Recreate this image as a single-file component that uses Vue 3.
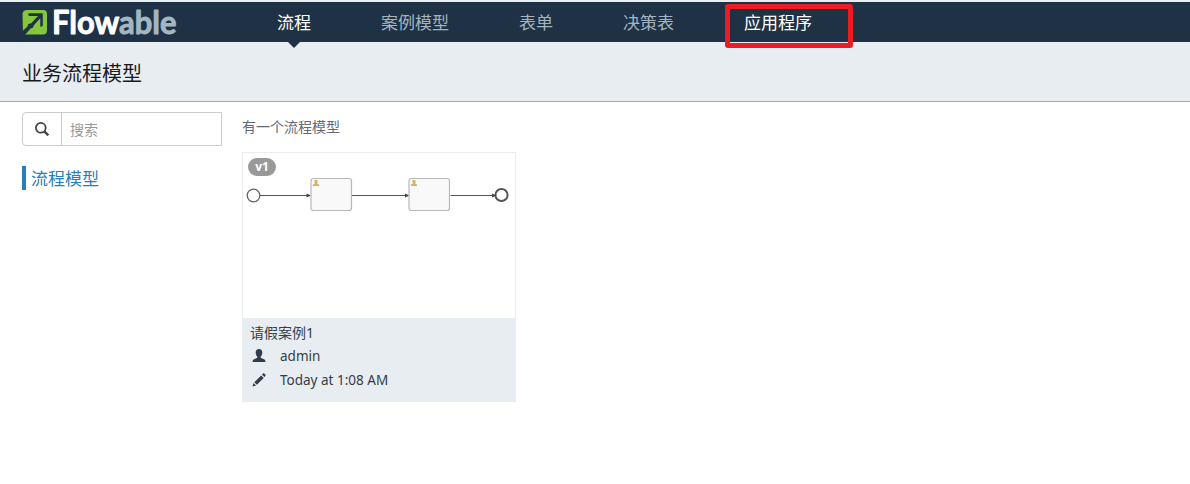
<script setup>
const tabs = [
  { label: '流程', active: true },
  { label: '案例模型' },
  { label: '表单' },
  { label: '决策表' },
  { label: '应用程序', marked: true }
]
</script>

<template>
  <div class="page">
    <nav class="navbar">
      <svg class="logo" width="160" height="36" viewBox="0 0 160 36">
        <path fill="#84c63c" d="M5 4H21Q25 4 25 8V24Q25 28.500 21 28.500H4L1 29L.5 8Q1 4 5 4Z" />
        <path fill="#1f3245" d="M6 8.300Q6.500 7.300 8 7.300H20.800V19.500Q20 20.800 18.300 20.800V12.300L12.500 18.500L10.500 22L8.500 22.500L3 29L0 29.500V25.500L5.500 20.500L6.300 18L9.200 17.300L16 10H8Q6.300 10 6 8.300Z" />
        <text class="wordmark" x="30" y="27.500" textLength="124.500" lengthAdjust="spacingAndGlyphs"><tspan fill="#fff" stroke="#fff">Flow</tspan><tspan fill="#a4b7c1" stroke="#a4b7c1">able</tspan></text>
      </svg>
      <ul class="tabs">
        <li v-for="tab in tabs" :key="tab.label" :class="{ active: tab.active, marked: tab.marked }">{{ tab.label }}</li>
      </ul>
    </nav>
    <header class="subheader"><h2>业务流程模型</h2></header>
    <main class="content">
      <aside class="sidebar">
        <div class="search">
          <span class="addon">
            <svg width="14" height="14" viewBox="0 0 14 14" fill="none" stroke="#444">
              <circle cx="5.800" cy="5.800" r="4.900" stroke-width="1.800" />
              <path d="M9.300 9.300L13.300 13.300" stroke-width="2.400" />
            </svg>
          </span>
          <input type="text" placeholder="搜索" />
        </div>
        <div class="filter">流程模型</div>
      </aside>
      <section class="models">
        <p class="summary">有一个流程模型</p>
        <article class="card">
          <div class="preview">
            <span class="badge">v1</span>
            <svg width="272" height="165" viewBox="0 0 272 165">
              <g fill="none" stroke="#555">
                <circle cx="10.5" cy="42.5" r="6.3" stroke="#666" stroke-width="1.3" />
                <path d="M17 42.5H67M109 42.5H165M207.500 42.5H252" stroke-width="1.2" />
                <circle cx="258.500" cy="42" r="6.1" stroke-width="2" />
              </g>
              <path fill="#444" d="M63.500 40.500L68 42.500L63.500 44.500ZM162 40.500L166.500 42.500L162 44.500ZM249 40.500L253.500 42.500L249 44.500Z" />
              <g v-for="x in [68, 166]" :key="x" :transform="`translate(${x} 25.5)`">
                <rect width="40.500" height="32" rx="2.5" fill="#f9f9f9" stroke="#b8b8b8" stroke-width="1.2" />
                <path fill="#d5b364" d="M3.500 1.500H6.500V4.500L6 5L8 6V7.500H2V6L4 5L3.500 4Z" />
              </g>
            </svg>
          </div>
          <footer class="details">
            <h3>请假案例1</h3>
            <p>
              <svg width="14" height="14" viewBox="0 0 14 14" fill="#333d47"><path d="M7 0C9.200 0 10.400 1.500 10.300 3.800C10.200 5.700 9.500 6.900 8.700 7.700V8.800L12.500 10.500Q13.500 11 13.500 13H.5Q.5 11 1.500 10.500L5.300 8.800V7.700C4.500 6.900 3.800 5.700 3.700 3.800C3.600 1.500 4.800 0 7 0Z" /></svg>
              <span>admin</span>
            </p>
            <p>
              <svg width="14" height="14" viewBox="0 0 14 14" fill="#333d47"><path d="M.5 13.500L1.500 10L4 12.500ZM2.300 9.200L9.200 2.400L11.700 4.900L4.900 11.700ZM10 1.600L11 .6Q11.700 0 12.300.6L13.400 1.700Q14 2.300 13.400 3L12.400 4Z" /></svg>
              <span>Today at 1:08 AM</span>
            </p>
          </footer>
        </article>
      </section>
    </main>
  </div>
</template>

<style>
body { background: #fff; }
</style>

<style scoped>
*, *::after { box-sizing: border-box; }
.page {
  height: 484px;
  overflow: hidden;
  border-top: 2px solid #e8edf1;
  background: #fff;
  font-family: "Noto Sans", "Noto Sans CJK SC", sans-serif;
  font-size: 14px;
  line-height: 20px;
}
.navbar { display: flex; height: 40px; padding-left: 22px; background: #1f3245; }
.logo { flex: none; margin-top: 4px; overflow: visible; }
.wordmark { font: 700 32px Lato, sans-serif; stroke-width: .9px; stroke-linejoin: round; }
.tabs { display: flex; gap: 70px; margin: 0 0 0 95px; padding: 0; list-style: none; color: #a4b4bf; font-size: 17px; line-height: 41px; }
.tabs li { position: relative; white-space: nowrap; }
.tabs .active, .tabs .marked { color: #fff; }
.active::after {
  content: "";
  position: absolute;
  top: 40px;
  left: 11px;
  border: 6px solid transparent;
  border-top-color: #1f3245;
  border-bottom: 0;
}
.marked::after {
  content: "";
  position: absolute;
  top: 2px;
  left: -19px;
  width: 128px;
  height: 44px;
  border: 5px solid #ed1c24;
  border-radius: 3px;
}
.subheader { display: flex; align-items: center; height: 60px; padding: 4px 22px 0; background: #e8edf1; border-bottom: 1px solid #a4acb9; }
h2 { margin: 0; color: #1a1a1a; font-size: 20px; font-weight: 400; }
.content { display: flex; gap: 20px; padding: 10px 22px; }
.sidebar { width: 200px; }
.search { display: flex; height: 34px; border: 1px solid #ccc; border-radius: 4px 0 0 4px; }
.addon { display: flex; flex: none; align-items: center; justify-content: center; width: 39px; border-right: 1px solid #ccc; }
input { flex: 1; min-width: 0; padding: 2px 8px 0; border: 0; background: none; font: inherit; }
input::placeholder { color: #999; opacity: 1; }
.filter { height: 24px; margin-top: 20px; padding-left: 5px; border-left: 4px solid #2980b9; color: #2980b9; font-size: 17px; line-height: 25px; }
.summary { margin: 5px 0 15px; color: #5f6b7c; }
.card { width: 274px; height: 250px; border: 1px solid #e8edf1; }
.preview { position: relative; height: 165px; }
.preview svg { display: block; }
.badge { position: absolute; top: 5px; left: 5px; width: 28px; height: 18px; border-radius: 9px; background: #999; color: #fff; font: 700 12px/18px "Open Sans", sans-serif; text-align: center; }
.details { height: 84px; padding: 5px 7px; background: #e8edf1; color: #333d47; }
h3 { margin: 0 0 1px; font-size: 14px; font-weight: 400; }
.details p { display: flex; align-items: center; gap: 14px; height: 24px; margin: 0; padding-left: 2px; font-size: 13.5px; }
</style>
